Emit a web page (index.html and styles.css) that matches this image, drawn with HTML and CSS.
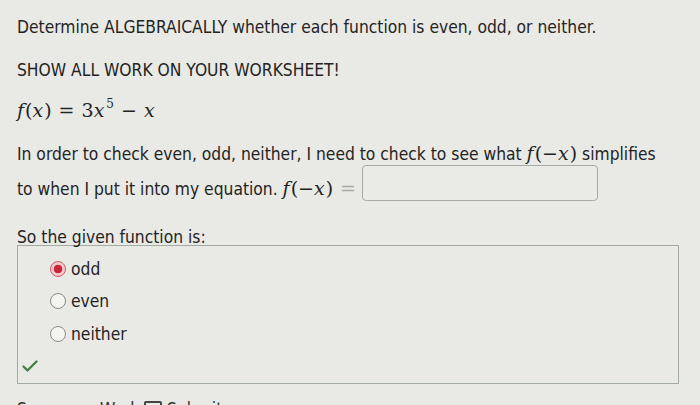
FILE: index.html
```html
<!DOCTYPE html>
<html>
<head>
<meta charset="utf-8">
<link rel="stylesheet" href="styles.css">
</head>
<body>
<div class="page">
  <p class="line l1">Determine ALGEBRAICALLY whether each function is even, odd, or neither.</p>
  <p class="line l2">SHOW ALL WORK ON YOUR WORKSHEET!</p>
  <p class="math-line"><span class="m"><i>f</i>(<i>x</i>)<span class="op">=</span>3<i>x</i><sup>5</sup><span class="op">−</span><i>x</i></span></p>
  <p class="para">In order to check even, odd, neither, I need to check to see what <span class="m"><i>f</i>(−<i>x</i>)</span> simplifies<br>to when I put it into my equation. <span class="m"><i>f</i>(−<i>x</i>)<span class="op eq">=</span></span><span class="answer"></span></p>
  <p class="label">So the given function is:</p>
  <div class="choices">
    <div class="choice"><span class="radio on"></span>odd</div>
    <div class="choice"><span class="radio"></span>even</div>
    <div class="choice"><span class="radio"></span>neither</div>
    <svg class="check" width="16" height="12" viewBox="0 0 16 12"><path d="M1.5 6.5 L5.5 10.5 L14.5 1.5" fill="none" stroke="#3f7f3f" stroke-width="2.2" stroke-linecap="round" stroke-linejoin="round"/></svg>
  </div>
  <p class="footer">Save your Work <span class="box"></span> Submit your answer</p>
</div>
</body>
</html>
```
FILE: styles.css
```css
html, body {
  margin: 0;
  padding: 0;
  background: #e9e9e5;
  overflow: hidden;
}
.page {
  width: 700px;
  height: 405px;
  padding: 17px 0 0 17px;
  box-sizing: border-box;
  font-family: "DejaVu Sans Condensed", "DejaVu Sans", sans-serif;
  font-size: 17.3px;
  color: #242424;
  overflow: hidden;
}
p { margin: 0; }
.line { line-height: 20px; }
.l2 { margin-top: 23px; }
.math-line {
  margin-top: 18px;
  line-height: 24px;
  height: 24px;
}
.m {
  font-family: "DejaVu Serif", "Liberation Serif", serif;
  font-size: 19px;
  color: #242424;
}
.m i { font-style: italic; margin-right: 1px; }
.m sup { font-size: 12px; vertical-align: 9px; line-height: 0; margin-left: 1px; }
.op { margin: 0 7px; font-style: normal; }
.eq { color: #aaa; margin-right: 6px; }
.para {
  margin-top: 14px;
  line-height: 34px;
}
.answer {
  display: inline-block;
  vertical-align: middle;
  width: 236px;
  height: 36px;
  border: 1px solid #a9a9a6;
  border-radius: 4px;
  box-sizing: border-box;
  background: #eaeae6;
  margin-top: -8px;
  margin-bottom: 6px;
}
.label {
  margin-top: 20px;
  line-height: 20px;
  position: relative;
  z-index: 1;
}
.choices {
  margin-top: -2px;
  width: 662px;
  height: 139px;
  box-sizing: border-box;
  border: 1px solid #a2aba2;
  padding: 7px 0 0 32px;
  position: relative;
}
.choice {
  display: flex;
  align-items: center;
  gap: 5px;
  height: 32px;
  line-height: 32px;
}
.choice:nth-child(3) { height: 33px; }
.radio {
  width: 16px;
  height: 16px;
  border-radius: 50%;
  border: 1.5px solid #8a8a8a;
  box-sizing: border-box;
  background: #f4f4f0;
  display: inline-block;
}
.radio.on {
  border: 1.5px solid #d45a6a;
  background: radial-gradient(circle, #c8283a 0 4px, #f1c9cd 4.6px);
}
.check {
  display: block;
  margin: 10px 0 0 -28px;
}
.footer {
  margin-top: 15px;
  line-height: 20px;
  color: #333;
}
.footer .box {
  display: inline-block;
  width: 14px;
  height: 14px;
  border: 2px solid #444;
  border-radius: 2px;
  vertical-align: middle;
}
```
